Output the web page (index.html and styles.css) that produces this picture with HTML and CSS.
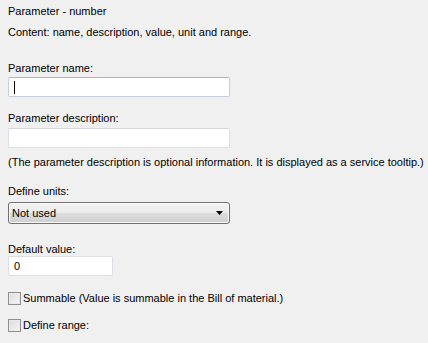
FILE: index.html
```html
<!DOCTYPE html>
<html>
<head>
<meta charset="utf-8">
<link rel="stylesheet" href="styles.css">
</head>
<body>
<div class="panel">
  <div class="txt title">Parameter - number</div>
  <div class="txt content">Content: name, description, value, unit and range.</div>

  <div class="txt lbl lbl-name">Parameter name:</div>
  <div class="field wide"><span class="caret"></span></div>

  <div class="txt lbl lbl-desc">Parameter description:</div>
  <div class="field wide desc"></div>

  <div class="txt note">(The parameter description is optional information. It is displayed as a service tooltip.)</div>

  <div class="txt lbl lbl-units">Define units:</div>
  <div class="combo">
    <span class="combo-text">Not used</span>
    <svg class="arrow" width="7" height="4" viewBox="0 0 7 4"><path d="M0 0H7L3.5 4Z" fill="#000"/></svg>
  </div>

  <div class="txt lbl lbl-def">Default value:</div>
  <div class="field short"><span class="val">0</span></div>

  <label class="check first"><span class="box"></span><span class="txt">Summable (Value is summable in the Bill of material.)</span></label>
  <label class="check second"><span class="box"></span><span class="txt">Define range:</span></label>
</div>
</body>
</html>
```

FILE: styles.css
```css
html, body {
  margin: 0;
  padding: 0;
  background: #f0f0f0;
}
body {
  font-family: "Liberation Sans", Arial, sans-serif;
  font-size: 11px;
  line-height: 13px;
  color: #000;
}
.panel {
  display: flex;
  flex-direction: column;
  align-items: flex-start;
  padding: 5px 8px 0 8px;
}
.txt {
  white-space: nowrap;
}
.content { margin-top: 8px; }
.lbl-name { margin-top: 23px; }
.field {
  box-sizing: border-box;
  height: 20px;
  background: #fff;
  border: 1px solid #c5cdd8;
  border-top-color: #abb4c2;
  border-radius: 2px;
  display: flex;
  align-items: center;
}
.wide { width: 222px; margin-top: 2px; }
.desc { margin-top: 3px; border-color: #dcdfe4; border-top-color: #d2d6dc; }
.caret {
  display: block;
  width: 1px;
  height: 13px;
  background: #000;
  margin-left: 5px;
}
.lbl-desc { margin-top: 15px; }
.note { margin-top: 8px; }
.lbl-units { margin-top: 16px; }
.combo {
  box-sizing: border-box;
  width: 222px;
  height: 22px;
  margin-top: 4px;
  border: 1px solid #707070;
  border-radius: 3px;
  background: linear-gradient(#f2f2f2 0%, #ebebeb 50%, #dddddd 51%, #cfcfcf 100%);
  box-shadow: inset 0 0 0 1px #fbfbfb;
  display: flex;
  align-items: center;
  justify-content: space-between;
  padding: 0 6px 0 3px;
}
.arrow { display: block; }
.lbl-def { margin-top: 19px; }
.short {
  width: 105px;
  margin-top: 0;
  border-color: #dcdfe4;
}
.val { margin-left: 5px; }
.check {
  display: flex;
  align-items: center;
  gap: 2px;
}
.check.first { margin-top: 16px; }
.check.second { margin-top: 14px; }
.box {
  box-sizing: border-box;
  width: 13px;
  height: 13px;
  border: 1px solid #8f8f8f;
  background: linear-gradient(135deg, #dcdcdc, #f5f5f5);
  box-shadow: inset 0 0 0 1px #e8e8e8;
}
```
